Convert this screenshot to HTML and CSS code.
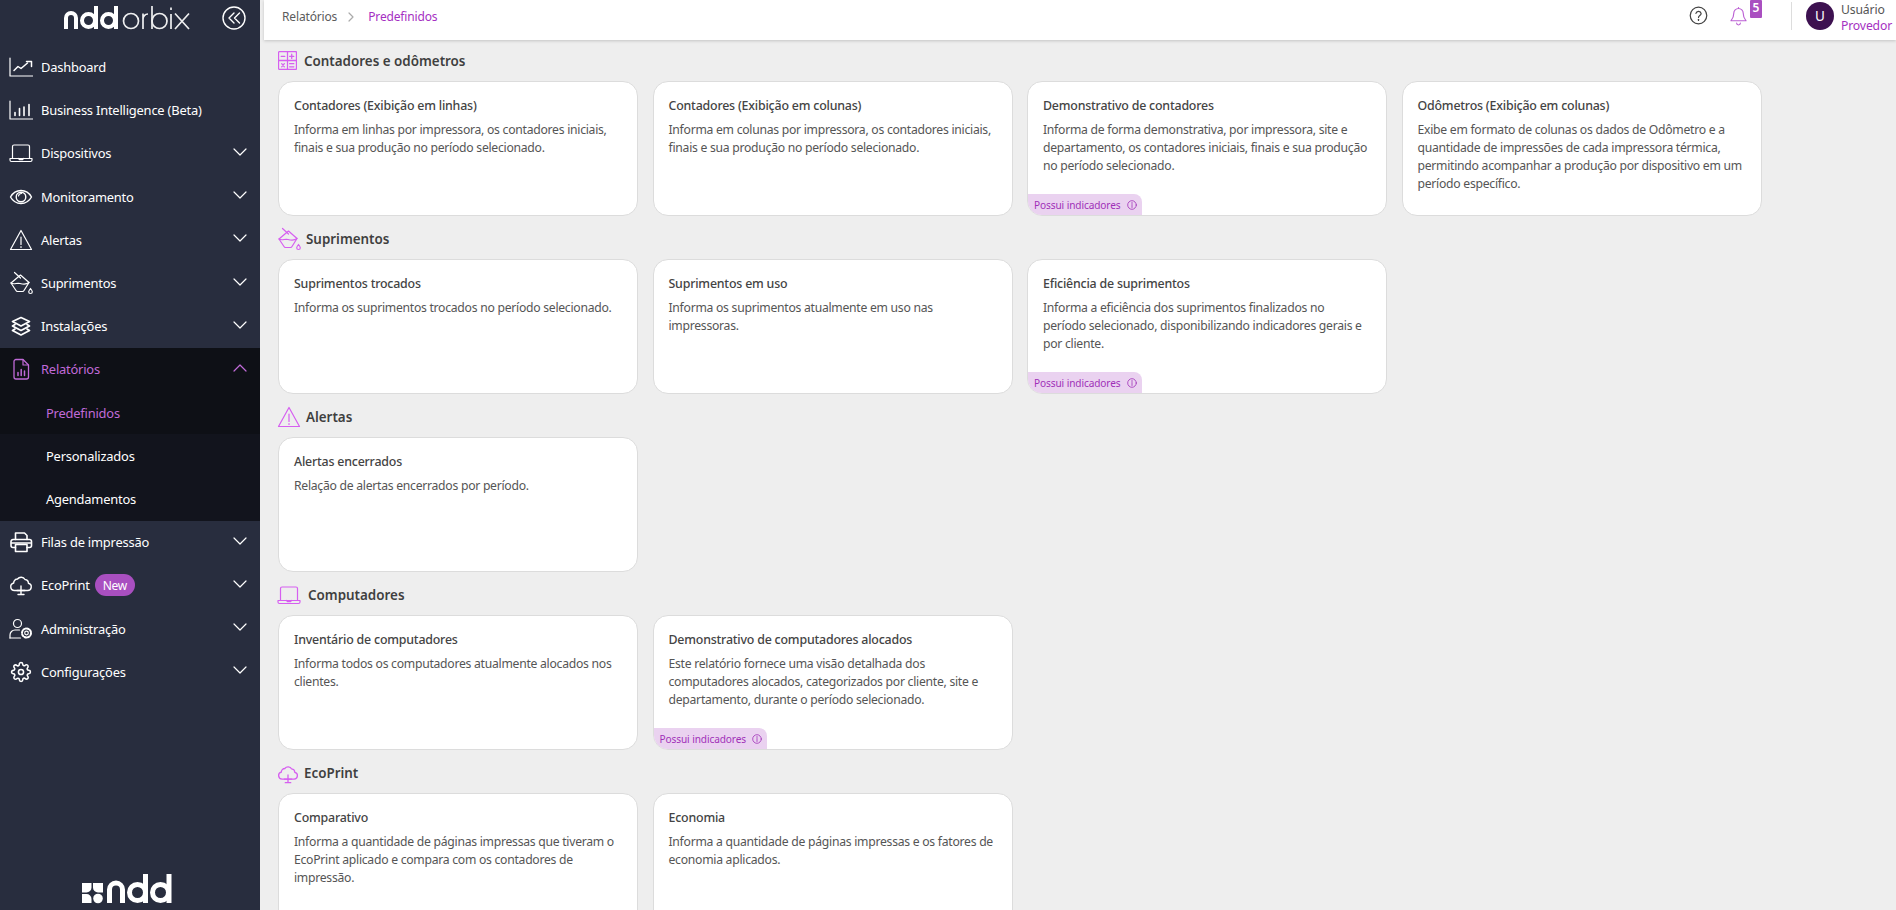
FILE: index.html
```html
<!DOCTYPE html>
<html lang="pt-BR">
<head>
<meta charset="utf-8">
<title>Relatórios predefinidos</title>
<link rel="stylesheet" href="styles.css">
</head>
<body>
<svg class="defs" width="0" height="0" aria-hidden="true">
  <symbol id="i-dash" viewBox="0 0 24 24"><path d="M1 3v18h22.500"/><path d="M5 15.500l4-4 3 2 6.500-5.500" stroke-width="1.500"/><path d="M17.500 6.500h5v5" stroke-width="1.500"/></symbol>
  <symbol id="i-bi" viewBox="0 0 24 24"><path d="M1 3v18h22.500"/><path d="M6 17.500v-3M10.500 17.500v-7M15 17.500v-8.500M20 17.500v-11" stroke-width="1.600"/></symbol>
  <symbol id="i-laptop" viewBox="0 0 24 24"><path d="M3.500 17V5.500a1.500 1.500 0 0 1 1.500-1.500h14a1.500 1.500 0 0 1 1.500 1.500V17"/><path d="M1 17.500h22v1.500a1.500 1.500 0 0 1-1.500 1.500h-19a1.500 1.500 0 0 1-1.500-1.500z"/><path d="M9.500 17.500l1 1.200h3l1-1.200"/></symbol>
  <symbol id="i-eye" viewBox="0 0 24 24"><path d="M1.500 12C4 7.500 7.800 5.500 12 5.500s8 2 10.500 6.500c-2.500 4.500-6.300 6.500-10.500 6.500S4 16.500 1.500 12z" stroke-width="1.400"/><circle cx="12" cy="12" r="4.800" stroke-width="1.400"/><path d="M9.500 11a3 3 0 0 1 3-2.500"/></symbol>
  <symbol id="i-alert" viewBox="0 0 24 24"><path d="M12 2.500L22.500 21.500H1.500z"/><path d="M12 9v7.500M12 18.500v1"/></symbol>
  <symbol id="i-bucket" viewBox="0 0 24 24"><path d="M2 12L11.500 4l8.500 7.500-5 8a2 2 0 0 1-1.500 1H8.500a2 2 0 0 1-1.500-1z"/><path d="M2 12c3.500 2 5.500 -.5 9 .5s6 1.500 9 -1"/><path d="M5.500 1.500l6 5.500"/><path d="M21.500 17.500c1.200 1.500 1.800 2.400 1.800 3.200a1.800 1.800 0 0 1-3.600 0c0-.8.600-1.700 1.800-3.200z"/></symbol>
  <symbol id="i-layers" viewBox="0 0 24 24"><g stroke-width="1.700"><path d="M12 3.500l8.500 4-8.500 4.500-8.500-4.500z"/><path d="M6 10.500l-2.500 1.500 8.500 4.500 8.500-4.500-2.500-1.500"/><path d="M6 15l-2.500 1.500 8.500 4.500 8.500-4.500-2.500-1.500"/></g></symbol>
  <symbol id="i-report" viewBox="0 0 24 24"><path d="M14 2.500H7a2 2 0 0 0-2 2V20a2 2 0 0 0 2 2h10.500a2 2 0 0 0 2-2V8z" stroke-width="1.300"/><path d="M14 2.500V8h5.500"/><path d="M9 18.500v-3M12.200 18.500v-6M15.500 18.500v-4.500" stroke-width="1.500"/></symbol>
  <symbol id="i-print" viewBox="0 0 24 24"><g stroke-width="1.600"><path d="M6.500 9.500V3h9l2.500 2.500v4"/><path d="M6.500 17.500H4a2 2 0 0 1-2-2v-4a2 2 0 0 1 2-2h16.500a2 2 0 0 1 2 2v4a2 2 0 0 1-2 2H18"/><path d="M6.500 14.500H18v7H6.500z"/><path d="M2.500 13h19"/></g></symbol>
  <symbol id="i-cloud" viewBox="0 0 24 24"><path d="M8 17.500H5.500a3.800 3.800 0 0 1-.8-7.500A3.800 3.800 0 0 1 8.500 6 4.500 4.500 0 0 1 16 6.500a3.800 3.800 0 0 1 3.400 3.700 3.700 3.700 0 0 1-1 7.300z" stroke-width="1.400"/><path d="M12 13v8M9 21.500h6M8 17.500h8" stroke-width="1.400"/></symbol>
  <symbol id="i-admin" viewBox="0 0 24 24"><circle cx="8.500" cy="6.500" r="4"/><path d="M1 21v-3a5 5 0 0 1 5-5h4.500"/><path d="M1 21h10.500"/><circle cx="17.500" cy="16" r="1.800"/><circle cx="17.500" cy="16" r="4.500" stroke-dasharray="2 1.500" stroke-width="2"/></symbol>
  <symbol id="i-gear" viewBox="-2 -2 28 28"><g stroke-width="1.800"><path d="M12 15a3 3 0 1 0 0-6 3 3 0 0 0 0 6z"/><path d="M19.400 15a1.650 1.650 0 0 0 .33 1.820l.06.06a2 2 0 0 1 0 2.830 2 2 0 0 1-2.830 0l-.06-.06a1.650 1.650 0 0 0-1.820-.33 1.650 1.650 0 0 0-1 1.510V21a2 2 0 0 1-2 2 2 2 0 0 1-2-2v-.09A1.650 1.650 0 0 0 9 19.400a1.650 1.650 0 0 0-1.820.33l-.06.06a2 2 0 0 1-2.830 0 2 2 0 0 1 0-2.830l.06-.06a1.650 1.650 0 0 0 .33-1.820 1.650 1.650 0 0 0-1.510-1H3a2 2 0 0 1-2-2 2 2 0 0 1 2-2h.09A1.650 1.650 0 0 0 4.600 9a1.650 1.650 0 0 0-.33-1.820l-.06-.06a2 2 0 0 1 0-2.830 2 2 0 0 1 2.830 0l.06.06a1.650 1.650 0 0 0 1.820.33H9a1.650 1.650 0 0 0 1-1.510V3a2 2 0 0 1 2-2 2 2 0 0 1 2 2v.09a1.650 1.650 0 0 0 1 1.510 1.650 1.650 0 0 0 1.820-.33l.06-.06a2 2 0 0 1 2.830 0 2 2 0 0 1 0 2.830l-.06.06a1.650 1.650 0 0 0-.33 1.820V9a1.650 1.650 0 0 0 1.510 1H21a2 2 0 0 1 2 2 2 2 0 0 1-2 2h-.09a1.650 1.650 0 0 0-1.510 1z"/></g></symbol>
  <symbol id="i-chev" viewBox="0 0 14 8"><path d="M1 1l6 6 6-6"/></symbol>
  <symbol id="i-calc" viewBox="0 0 18 18"><rect x=".5" y=".5" width="17" height="17" rx="1"/><path d="M9 .5v17M.5 9h17M3 5h3.500M11 5h4M13 3v4M3.500 12l2.500 3M6 12l-2.500 3M11 12h4M11 15h4"/></symbol>
  <symbol id="i-info" viewBox="0 0 10 10"><circle cx="5" cy="5" r="4.300"/><path d="M5 4.500v3M5 2.500v1"/></symbol>
</svg>

<div class="app">
  <aside class="sidebar">
    <div class="side-head">
      <svg class="logo" viewBox="0 0 128 24" role="img" aria-label="ndd orbix">
        <g class="logo-bold">
          <path d="M2 23V12a5 5 0 0 1 10 0v11"/>
          <circle cx="24.500" cy="14.500" r="6.500"/><path d="M32 0v23"/>
          <circle cx="44.500" cy="14.500" r="6.500"/><path d="M52 0v23"/>
        </g>
        <g class="logo-thin">
          <circle cx="67" cy="15" r="7.500"/>
          <path d="M79 7.500v15.500M79 13.500a5 5 0 0 1 5-5.500"/>
          <circle cx="95.500" cy="15" r="7.500"/><path d="M88 0v23"/>
          <path d="M107 8v15M107 1.500v2.500"/>
          <path d="M111 7.500l14 15.500M125 7.500l-14 15.500"/>
        </g>
      </svg>
      <svg class="collapse" viewBox="0 0 24 24"><circle cx="12" cy="12" r="11"/><path d="M12 7l-5 5 5 5M17.500 7l-5 5 5 5"/></svg>
    </div>
    <nav class="nav">
      <a class="nav-item"><svg class="nav-ico"><use href="#i-dash"/></svg><span>Dashboard</span></a>
      <a class="nav-item"><svg class="nav-ico"><use href="#i-bi"/></svg><span>Business Intelligence (Beta)</span></a>
      <a class="nav-item"><svg class="nav-ico"><use href="#i-laptop"/></svg><span>Dispositivos</span><svg class="chev"><use href="#i-chev"/></svg></a>
      <a class="nav-item"><svg class="nav-ico"><use href="#i-eye"/></svg><span>Monitoramento</span><svg class="chev"><use href="#i-chev"/></svg></a>
      <a class="nav-item"><svg class="nav-ico"><use href="#i-alert"/></svg><span>Alertas</span><svg class="chev"><use href="#i-chev"/></svg></a>
      <a class="nav-item"><svg class="nav-ico"><use href="#i-bucket"/></svg><span>Suprimentos</span><svg class="chev"><use href="#i-chev"/></svg></a>
      <a class="nav-item"><svg class="nav-ico"><use href="#i-layers"/></svg><span>Instalações</span><svg class="chev"><use href="#i-chev"/></svg></a>
      <div class="nav-group">
        <a class="nav-item is-open"><svg class="nav-ico"><use href="#i-report"/></svg><span>Relatórios</span><svg class="chev chev-up"><use href="#i-chev"/></svg></a>
        <a class="nav-sub is-active">Predefinidos</a>
        <a class="nav-sub">Personalizados</a>
        <a class="nav-sub">Agendamentos</a>
      </div>
      <a class="nav-item"><svg class="nav-ico"><use href="#i-print"/></svg><span>Filas de impressão</span><svg class="chev"><use href="#i-chev"/></svg></a>
      <a class="nav-item"><svg class="nav-ico"><use href="#i-cloud"/></svg><span>EcoPrint</span><em class="pill">New</em><svg class="chev"><use href="#i-chev"/></svg></a>
      <a class="nav-item"><svg class="nav-ico"><use href="#i-admin"/></svg><span>Administração</span><svg class="chev"><use href="#i-chev"/></svg></a>
      <a class="nav-item"><svg class="nav-ico"><use href="#i-gear"/></svg><span>Configurações</span><svg class="chev"><use href="#i-chev"/></svg></a>
    </nav>
    <div class="side-foot">
      <svg class="logo-foot" viewBox="0 0 90 30" role="img" aria-label="ndd">
        <path class="foot-fill" d="M0 9h9.500v4.500a5 5 0 0 1-5 5H0zM11 9h10v9.500h-5a5 5 0 0 1-5-5zM0 20h4.500a5 5 0 0 1 5 5v4H0z"/>
        <circle class="foot-fill" cx="16" cy="24.500" r="4.800"/>
        <g class="foot-stroke">
          <path d="M27.500 29V15.500a6.500 6.500 0 0 1 13 0V29"/>
          <circle cx="55.500" cy="18.500" r="8"/><path d="M63.500 0v29"/>
          <circle cx="78.500" cy="18.500" r="8"/><path d="M87 0v29"/>
        </g>
      </svg>
    </div>
  </aside>

  <div class="page">
    <header class="topbar">
      <nav class="crumbs">
        <span>Relatórios</span>
        <svg class="crumb-sep" viewBox="0 0 6 10"><path d="M1 1l4 4-4 4"/></svg>
        <span class="crumb-now">Predefinidos</span>
      </nav>
      <div class="top-actions">
        <svg class="help" viewBox="0 0 20 20"><circle cx="10" cy="10" r="8.700"/><path d="M7.300 7.800A2.800 2.800 0 0 1 12.800 8c0 1.900-2.800 2.100-2.800 4"/><path d="M10 14v1.200"/></svg>
        <div class="bell-wrap">
          <svg class="bell" viewBox="0 0 18 20"><path d="M9 2a5 5 0 0 0-5 5c0 5-2.500 7-3 8h16c-.5-1-3-3-3-8a5 5 0 0 0-5-5zM9 2V1M7 17.500a2 2 0 0 0 4 0"/></svg>
          <b class="badge">5</b>
        </div>
        <div class="user">
          <div class="avatar">U</div>
          <div class="user-text"><span>Usuário</span><span class="user-role">Provedor</span></div>
        </div>
      </div>
    </header>

    <main class="content">
      <section class="group">
        <h2 class="group-title"><svg class="ico-calc"><use href="#i-calc"/></svg>Contadores e odômetros</h2>
        <div class="cards">
          <article class="card"><h3>Contadores (Exibição em linhas)</h3><p>Informa em linhas por impressora, os contadores iniciais, finais e sua produção no período selecionado.</p></article>
          <article class="card"><h3>Contadores (Exibição em colunas)</h3><p>Informa em colunas por impressora, os contadores iniciais, finais e sua produção no período selecionado.</p></article>
          <article class="card"><h3>Demonstrativo de contadores</h3><p>Informa de forma demonstrativa, por impressora, site e departamento, os contadores iniciais, finais e sua produção no período selecionado.</p><div class="flag">Possui indicadores<svg class="info"><use href="#i-info"/></svg></div></article>
          <article class="card"><h3>Odômetros (Exibição em colunas)</h3><p>Exibe em formato de colunas os dados de Odômetro e a quantidade de impressões de cada impressora térmica, permitindo acompanhar a produção por dispositivo em um período específico.</p></article>
        </div>
      </section>
      <section class="group">
        <h2 class="group-title"><svg class="ico-wide"><use href="#i-bucket"/></svg>Suprimentos</h2>
        <div class="cards">
          <article class="card"><h3>Suprimentos trocados</h3><p>Informa os suprimentos trocados no período selecionado.</p></article>
          <article class="card"><h3>Suprimentos em uso</h3><p>Informa os suprimentos atualmente em uso nas impressoras.</p></article>
          <article class="card"><h3>Eficiência de suprimentos</h3><p>Informa a eficiência dos suprimentos finalizados no<br>período selecionado, disponibilizando indicadores gerais e por cliente.</p><div class="flag">Possui indicadores<svg class="info"><use href="#i-info"/></svg></div></article>
        </div>
      </section>
      <section class="group">
        <h2 class="group-title"><svg class="ico-wide"><use href="#i-alert"/></svg>Alertas</h2>
        <div class="cards">
          <article class="card"><h3>Alertas encerrados</h3><p>Relação de alertas encerrados por período.</p></article>
        </div>
      </section>
      <section class="group">
        <h2 class="group-title"><svg class="ico-laptop"><use href="#i-laptop"/></svg>Computadores</h2>
        <div class="cards">
          <article class="card"><h3>Inventário de computadores</h3><p>Informa todos os computadores atualmente alocados nos clientes.</p></article>
          <article class="card"><h3>Demonstrativo de computadores alocados</h3><p>Este relatório fornece uma visão detalhada dos computadores alocados, categorizados por cliente, site e departamento, durante o período selecionado.</p><div class="flag">Possui indicadores<svg class="info"><use href="#i-info"/></svg></div></article>
        </div>
      </section>
      <section class="group">
        <h2 class="group-title"><svg class="ico-cloud"><use href="#i-cloud"/></svg>EcoPrint</h2>
        <div class="cards">
          <article class="card"><h3>Comparativo</h3><p>Informa a quantidade de páginas impressas que tiveram o EcoPrint aplicado e compara com os contadores de impressão.</p></article>
          <article class="card"><h3>Economia</h3><p>Informa a quantidade de páginas impressas e os fatores de economia aplicados.</p></article>
        </div>
      </section>
    </main>
  </div>
</div>
</body>
</html>
```

FILE: styles.css
```css
* { box-sizing: border-box; }
html, body { height: 100%; margin: 0; overflow: hidden; }
body { font-family: "Noto Sans", "Open Sans", sans-serif; background: #eeeeee; color: #444; }
.defs { position: absolute; }
svg { display: block; fill: none; stroke: currentColor; stroke-width: 1.200; stroke-linecap: round; stroke-linejoin: round; flex: none; }

.app { display: flex; height: 910px; }

/* Sidebar */
.sidebar { width: 260px; flex: none; background: #282d3e; color: #fff; display: flex; flex-direction: column; margin-right: 4px; }
.side-head { height: 45.500px; display: flex; align-items: flex-start; padding: 6px 14px 0 64px; justify-content: space-between; }
.logo { width: 128px; height: 24px; overflow: visible; }
.logo-bold { stroke-width: 4; stroke-linecap: butt; }
.logo-thin { stroke-width: 1.700; stroke-linecap: butt; opacity: .92; }
.collapse { width: 24px; height: 24px; stroke-width: 1.400; }

.nav { display: flex; flex-direction: column; }
.nav-item { height: 43.200px; display: flex; align-items: center; padding: 0 13px 0 9px; font-size: 12.900px; letter-spacing: -.2px; color: #fff; }
.nav-ico { width: 24px; height: 24px; margin-right: 8px; }
.chev { width: 14px; height: 8px; margin-left: auto; margin-bottom: 3px; }
.chev-up { transform: rotate(180deg); }
.pill { font-style: normal; background: #a94fc0; color: #fff; border-radius: 11px; height: 22px; padding: 0 8px; margin-left: 5px; font-size: 12px; line-height: 23px; }
.nav-group { background: #12141d; }
.is-open { background: #0e1016; color: #c06ad8; }
.nav-sub { display: block; height: 43.200px; line-height: 45px; padding-left: 46px; font-size: 12.900px; letter-spacing: -.2px; color: #fff; }
.nav-sub.is-active { background: #0e1016; color: #c06ad8; }
.side-foot { margin-top: auto; padding: 0 0 6px 82px; }
.logo-foot { width: 90px; height: 30px; }
.foot-fill { fill: #fff; stroke: none; }
.foot-stroke { stroke: #fff; stroke-width: 5; stroke-linecap: butt; }

/* Top bar */
.page { flex: 1; min-width: 0; display: flex; flex-direction: column; }
.topbar { height: 40px; flex: none; background: #fff; box-shadow: 0 1px 3px rgba(0,0,0,.18); display: flex; align-items: flex-start; justify-content: space-between; position: relative; padding-left: 18px; }
.crumbs { display: flex; align-items: center; height: 33px; font-size: 12px; letter-spacing: -.15px; color: #5c5c5c; }
.crumb-sep { width: 6px; height: 10px; margin: 0 14px 0 11px; color: #aaa; }
.crumb-now { color: #a52fc2; }
.top-actions { display: flex; align-items: flex-start; }
.help { width: 19px; height: 19px; margin: 6px 0 0; color: #444; stroke-width: 1.300; }
.bell-wrap { position: relative; width: 18px; height: 22px; margin: 6px 0 0 22px; color: #bb5fd3; }
.bell { width: 17px; height: 20px; }
.badge { position: absolute; top: -6px; left: 20px; width: 12px; height: 18px; background: #a94fc0; color: #fff; font-size: 12px; font-weight: 600; text-align: center; line-height: 15px; border-radius: 1px; }
.user { display: flex; align-items: flex-start; margin-left: 43px; padding-left: 14px; border-left: 1px solid #ddd; height: 28px; margin-top: 2px; }
.avatar { width: 28px; height: 28px; border-radius: 50%; background: #3d1150; color: #fff; font-size: 13.500px; text-align: center; line-height: 29px; }
.user-text { display: flex; flex-direction: column; margin-left: 7px; font-size: 12.200px; letter-spacing: -.15px; line-height: 16px; color: #555; width: 55px; white-space: nowrap; }
.user-role { color: #a52fc2; }

/* Content */
.content { flex: 1; padding: 9px 0 0 14px; overflow: hidden; }
.group { margin-bottom: 11px; }
.group-title { display: flex; align-items: center; gap: 7px; height: 23px; margin: 0 0 9px; font-size: 13.400px; font-weight: 600; color: #3f3f3f; }
.group-title svg { color: #d65ff0; }
.ico-calc { width: 19px; height: 19px; }
.ico-wide { width: 24px; height: 24px; margin: 0 -1.500px; }
.ico-laptop { width: 24px; height: 24px; margin-left: -1px; }
.ico-cloud { width: 22px; height: 22px; margin: 2px -1.500px 0; }
.cards { display: flex; gap: 14.500px; }
.card { position: relative; width: 360px; height: 135px; flex: none; background: #fff; border: 1px solid #dcdcdc; border-radius: 15px; padding: 15px 13px 15px 15px; overflow: hidden; }
.card h3 { margin: 0 0 6px; font-size: 12.400px; letter-spacing: -.2px; line-height: 18px; font-weight: 500; color: #444; }
.card p { margin: 0; font-size: 12.200px; letter-spacing: -.27px; line-height: 18px; color: #555; }
.flag { position: absolute; left: 0; bottom: 0; display: flex; align-items: center; gap: 6px; height: 21px; padding: 0 5px 0 6px; background: #ead2f0; color: #a030b8; font-size: 10.100px; letter-spacing: -.1px; border-top-right-radius: 8px; }
.info { width: 10px; height: 10px; stroke-width: .8; }
```
